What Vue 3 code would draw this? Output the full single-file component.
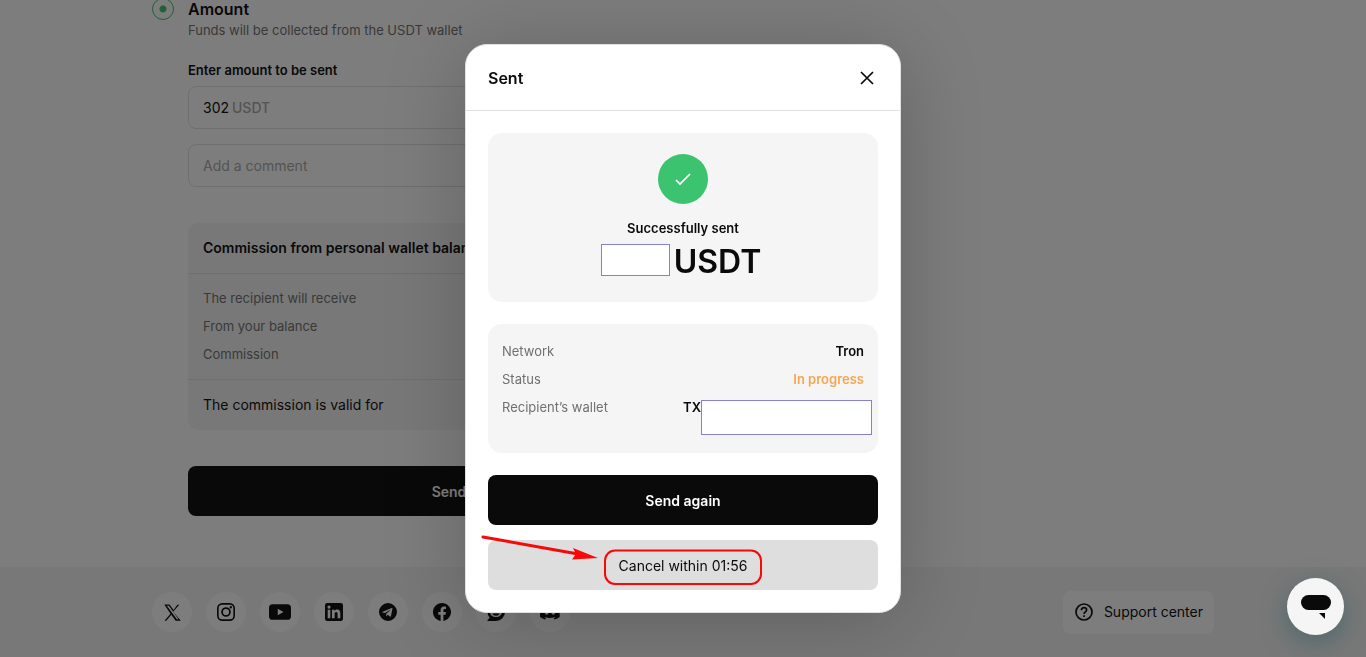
<script setup>
import { ref } from 'vue'

const amount = ref('302')
const comment = ref('')
const mode = ref('amount')

const commissionRows = ['The recipient will receive', 'From your balance', 'Commission']

const socials = [
  { name: 'X', size: 17, path: 'M18.901 1.153h2.600l-8.500 9.800L23.800 23.500h-7.400l-6.100-8.200-7 8.200H.700l8.500-9.900L.400.800h7.400l5.700 7.600ZM18.200 21.700h2.300L6.900 2.600H4Z' },
  { name: 'Instagram', size: 18, path: 'M7 0h10a7 7 0 0 1 7 7v10a7 7 0 0 1-7 7H7a7 7 0 0 1-7-7V7a7 7 0 0 1 7-7Zm0 2.200A4.800 4.800 0 0 0 2.200 7v10A4.800 4.800 0 0 0 7 21.800h10a4.800 4.800 0 0 0 4.800-4.800V7A4.800 4.800 0 0 0 17 2.200ZM12 5.600a6.400 6.400 0 1 1 0 12.800 6.400 6.400 0 0 1 0-12.800Zm0 2.300a4.100 4.100 0 1 0 0 8.200 4.100 4.100 0 0 0 0-8.200ZM18.400 4a1.600 1.600 0 1 1 0 3.200 1.600 1.600 0 0 1 0-3.200Z' },
  { name: 'YouTube', size: 22, path: 'M20 3.500a4 4 0 0 1 4 4v9a4 4 0 0 1-4 4H4a4 4 0 0 1-4-4v-9a4 4 0 0 1 4-4ZM9.545 15.568L15.818 12 9.545 8.432Z' },
  { name: 'LinkedIn', size: 18, path: 'M3 0h18a3 3 0 0 1 3 3v18a3 3 0 0 1-3 3H3a3 3 0 0 1-3-3V3a3 3 0 0 1 3-3Zm.600 9v11.400h3.500V9ZM5.350 3.400a2.050 2.050 0 1 0 0 4.100 2.050 2.050 0 0 0 0-4.100ZM9.300 9v11.400h3.550v-5.600c0-1.500.300-2.900 2.100-2.900s1.850 1.700 1.850 3v5.500h3.600v-6.200c0-3.100-.700-5.500-4.250-5.500-1.700 0-2.850.950-3.350 1.850V9Z' },
  { name: 'Telegram', size: 18, path: 'M12 0a12 12 0 1 0 0 24 12 12 0 0 0 0-24Zm5.900 7.200-2 10.300c-.150.700-.600.900-1.200.550l-3.100-2.300-1.500 1.450c-.200.200-.350.300-.600.300l.200-3.200 5.800-5.200c.250-.250-.050-.350-.400-.150l-7.200 4.500-3.100-.950c-.650-.200-.700-.650.150-1l12-4.700c.600-.200 1.100.150.950.400Z' },
  { name: 'Facebook', size: 18, path: 'M24 12.073C24 5.446 18.627.073 12 .073S0 5.446 0 12.073c0 5.990 4.388 10.954 10.125 11.854v-8.385H7.078v-3.469h3.047V9.430c0-3.007 1.792-4.669 4.533-4.669 1.312 0 2.686.235 2.686.235v2.953H15.830c-1.491 0-1.956.925-1.956 1.874v2.250h3.328l-.532 3.469h-2.796v8.385C19.612 23.027 24 18.062 24 12.073Z' },
  { name: 'Reddit chat', size: 18, path: 'M12 0a12 12 0 0 1 0 24H1c-.600 0-.800-.600-.400-1l3-3.300A12 12 0 0 1 12 0Zm0 5c-4.600 0-8 2.900-8 6.900s3.400 6.800 8 6.800 8-3.200 8-6.800S16.600 5 12 5ZM8.800 9.500a1.700 1.700 0 1 1 0 3.400 1.700 1.700 0 0 1 0-3.400Zm6.400 0a1.700 1.700 0 1 1 0 3.400 1.700 1.700 0 0 1 0-3.400ZM7.500 14h9c-.500 1.900-2.200 3-4.500 3s-4-1.100-4.500-3Z' },
  { name: 'Discord', size: 20, path: 'M20.317 4.370a19.791 19.791 0 0 0-4.885-1.515c-.300.400-.500.850-.684 1.250a18.270 18.270 0 0 0-5.487 0c-.200-.430-.400-.860-.694-1.250A19.736 19.736 0 0 0 3.677 4.370C.533 9.046-.320 13.580.099 18.058a19.900 19.900 0 0 0 5.993 3.030c.460-.630.870-1.300 1.226-1.994a13.107 13.107 0 0 1-1.872-.892l.372-.292c3.928 1.793 8.180 1.793 12.062 0l.373.292c-.600.350-1.220.650-1.873.892.360.698.772 1.362 1.225 1.993a19.839 19.839 0 0 0 6.002-3.030c.500-5.177-.838-9.674-3.290-13.687ZM8.020 15.330c-1.183 0-2.157-1.085-2.157-2.419s.956-2.419 2.157-2.419 2.176 1.096 2.157 2.420c0 1.333-.956 2.418-2.157 2.418Zm7.975 0c-1.183 0-2.157-1.085-2.157-2.419s.955-2.419 2.157-2.419 2.176 1.096 2.157 2.420c0 1.333-.946 2.418-2.157 2.418Z' },
]
</script>

<template>
  <div class="page">
    <main class="wrap">
      <form class="step" @submit.prevent>
        <input id="mode-amount" v-model="mode" class="radio" type="radio" value="amount" />
        <div class="fields">
          <label class="step-title" for="mode-amount">Amount</label>
          <p class="step-note">Funds will be collected from the USDT wallet</p>

          <label class="field-label" for="amount">Enter amount to be sent</label>
          <div class="field">
            <input id="amount" v-model="amount" class="amount" type="text" />
            <span class="unit">USDT</span>
          </div>
          <input v-model="comment" class="field comment" type="text" placeholder="Add a comment" aria-label="Add a comment" />

          <section class="commission">
            <h2 class="commission-head">Commission from personal wallet balance</h2>
            <ul class="commission-rows">
              <li v-for="row in commissionRows" :key="row">{{ row }}</li>
            </ul>
            <p class="commission-foot">The commission is valid for</p>
          </section>

          <button class="btn primary send" type="submit">Send</button>
        </div>
      </form>
    </main>

    <footer class="footer">
      <div class="wrap footer-row">
        <nav class="socials" aria-label="Social networks">
          <a v-for="s in socials" :key="s.name" href="#" :aria-label="s.name" class="social">
            <svg :width="s.size" :height="s.size" viewBox="0 0 24 24" fill="currentColor" fill-rule="evenodd"><path :d="s.path" /></svg>
          </a>
        </nav>
        <a class="support" href="#">
          <svg width="20" height="20" viewBox="0 0 20 20" fill="none" stroke="currentColor" stroke-width="1.700">
            <circle cx="10" cy="10" r="8" />
            <path d="M7.400 8.200c0-1.500 1.100-2.500 2.600-2.500s2.600 1 2.600 2.300c0 1.900-2.500 2-2.500 4" />
            <path d="M10.100 13.200v1.700" />
          </svg>
          Support center
        </a>
      </div>
    </footer>

    <div class="overlay">
      <section class="modal" role="dialog" aria-modal="true" aria-labelledby="modal-title">
        <header class="modal-head">
          <h1 id="modal-title">Sent</h1>
          <button class="close" type="button" aria-label="Close">
            <svg width="14" height="14" viewBox="0 0 14 14" fill="none" stroke="currentColor" stroke-width="1.700"><path d="M1 1l12 12M13 1L1 13" /></svg>
          </button>
        </header>
        <div class="modal-body">
          <div class="card result">
            <span class="badge">
              <svg width="16" height="14" viewBox="0 0 16 14" fill="none" stroke="currentColor" stroke-width="1.700"><path d="M1 8l4 4L15 2" /></svg>
            </span>
            <p class="result-text">Successfully sent</p>
            <p class="sum"><span class="mask mask-sum"></span>USDT</p>
          </div>

          <dl class="card details">
            <div class="detail"><dt>Network</dt><dd>Tron</dd></div>
            <div class="detail"><dt>Status</dt><dd class="progress">In progress</dd></div>
            <div class="detail wallet"><dt>Recipient’s wallet</dt><dd class="address">TX<span class="mask mask-address"></span></dd></div>
          </dl>

          <button class="btn primary" type="button">Send again</button>
          <div class="cancel-area">
            <button class="btn cancel" type="button">Cancel within 01:56</button>
            <svg class="marker" width="390" height="50" viewBox="0 0 390 50" fill="none" stroke="#f80808" aria-hidden="true">
              <rect x="117" y="10.500" width="156" height="33.500" rx="10" stroke-width="2" />
              <path d="M-5-3L90 14" stroke-width="3" stroke-linecap="round" />
              <path d="M85 8l25 10-26 1.500 4-5.500z" fill="#f80808" stroke="none" />
            </svg>
          </div>
        </div>
      </section>
    </div>

    <button class="chat" type="button" aria-label="Open chat">
      <svg width="30" height="24" viewBox="0 0 30 24" fill="currentColor"><rect x="0" y="0" width="30" height="15" rx="7.500" /><path d="M18 18h6v6z" /></svg>
    </button>
  </div>
</template>

<style>
body {
  margin: 0;
}
</style>

<style scoped>
.page {
  position: relative;
  display: flex;
  flex-direction: column;
  min-height: 100vh;
  overflow: hidden;
  background: #fff;
  color: #0a0a0a;
  font: 13px/20px Inter, "Noto Sans", sans-serif;
}
.page *,
.page {
  box-sizing: border-box;
}
h1, h2, p, ul, dl, dd {
  margin: 0;
  padding: 0;
}
button, input {
  font-family: inherit;
  color: inherit;
}
.wrap {
  width: 100%;
  max-width: 1062px;
  margin: 0 auto;
}
main.wrap {
  flex: 1;
}
.step {
  display: flex;
  gap: 14px;
  margin-top: -2px;
}
.radio {
  appearance: none;
  width: 22px;
  height: 22px;
  margin: 0;
  flex: none;
  border: 1px solid #3bc370;
  border-radius: 50%;
  background: radial-gradient(circle, #3bc370 3px, transparent 4px);
}
.fields {
  display: flex;
  flex-direction: column;
  flex: 1;
  max-width: 522px;
}
.step-title {
  font-size: 16px;
  line-height: 22px;
  font-weight: 600;
}
.step-note {
  color: #707070;
}
.field-label {
  margin: 20px 0 6px;
  font-weight: 600;
}
.field {
  display: flex;
  align-items: center;
  gap: 3px;
  height: 43px;
  padding: 0 14px;
  border: 1px solid #e1e1e1;
  border-radius: 8px;
  background: none;
  font-size: 14px;
}
.amount {
  width: 26px;
  padding: 0;
  border: 0;
  background: none;
  font-size: 14px;
}
.unit {
  color: #a8a8a8;
  font-weight: 500;
}
.comment {
  margin-top: 15px;
}
.comment::placeholder {
  color: #a8a8a8;
  opacity: 1;
}
.commission {
  margin-top: 36px;
  border-radius: 10px;
  background: #f5f5f5;
}
.commission-head {
  padding: 15px;
  border-bottom: 1px solid #e1e1e1;
  font-size: 14px;
  line-height: 20px;
  font-weight: 600;
}
.commission-rows {
  display: flex;
  flex-direction: column;
  gap: 8px;
  padding: 14px 15px 15px;
  border-bottom: 1px solid #e1e1e1;
  list-style: none;
  color: #707070;
}
.commission-foot {
  padding: 15px;
  font-size: 14px;
}
.btn {
  width: 100%;
  height: 50px;
  border: 0;
  border-radius: 8px;
  font-size: 14px;
}
.primary {
  background: #0a0a0a;
  color: #fff;
  font-weight: 600;
}
.send {
  margin-top: 36px;
}
.footer {
  background: #f5f5f5;
}
.footer-row {
  display: flex;
  align-items: center;
  justify-content: space-between;
  height: 90px;
}
.socials {
  display: flex;
  gap: 14px;
}
.social {
  display: grid;
  place-items: center;
  width: 40px;
  height: 40px;
  border-radius: 50%;
  background: #fff;
  color: inherit;
}
.support {
  display: flex;
  align-items: center;
  gap: 10px;
  height: 43px;
  padding: 0 11px;
  border-radius: 8px;
  background: #fff;
  color: inherit;
  font-size: 14px;
  text-decoration: none;
}
.overlay {
  position: fixed;
  inset: 0;
  display: grid;
  place-items: center;
  background: rgba(10, 10, 10, 0.53);
}
.modal {
  width: 100%;
  max-width: 436px;
  border: 1px solid #e1e1e1;
  border-radius: 22px;
  background: #fff;
  box-shadow: 0 8px 80px rgba(0, 0, 0, 0.22);
}
.modal-head {
  display: flex;
  align-items: center;
  justify-content: space-between;
  height: 66px;
  padding: 0 22px;
  border-bottom: 1px solid #e1e1e1;
}
.modal-head h1 {
  font-size: 16px;
  font-weight: 600;
}
.close {
  display: grid;
  place-items: center;
  width: 22px;
  height: 22px;
  padding: 0;
  border: 0;
  background: none;
}
.modal-body {
  display: flex;
  flex-direction: column;
  gap: 22px;
  padding: 22px;
}
.card {
  border-radius: 14px;
  background: #f5f5f5;
}
.result {
  display: flex;
  flex-direction: column;
  align-items: center;
  padding: 21px 14px 20px;
}
.badge {
  display: grid;
  place-items: center;
  width: 50px;
  height: 50px;
  border-radius: 50%;
  background: #3bc370;
  color: #fff;
}
.result-text {
  margin: 14px 0 4px;
  font-weight: 600;
}
.sum {
  display: flex;
  align-items: center;
  gap: 4px;
  padding-right: 4px;
  font-size: 32px;
  line-height: 40px;
  font-weight: 600;
}
.mask {
  border: 1px solid #8580d0;
  background: #fff;
}
.mask-sum {
  width: 69px;
  height: 32px;
  margin-bottom: 4px;
}
.details {
  display: flex;
  flex-direction: column;
  gap: 8px;
  padding: 17px 14px 16px;
}
.detail {
  display: flex;
  justify-content: space-between;
}
.detail dt {
  color: #707070;
}
.detail dd {
  font-weight: 600;
}
.detail .progress {
  color: #f7a650;
}
.wallet {
  height: 40px;
}
.address {
  display: flex;
}
.mask-address {
  width: 171px;
  height: 35px;
  margin: 3px -8px 0 0;
}
.cancel-area {
  position: relative;
  margin-top: -7px;
}
.cancel {
  display: block;
  background: #dedede;
}
.marker {
  position: absolute;
  top: 0;
  left: 50%;
  margin-left: -195px;
  overflow: visible;
  pointer-events: none;
}
.chat {
  position: fixed;
  right: 22px;
  bottom: 22px;
  display: grid;
  place-items: center;
  width: 57px;
  height: 57px;
  padding: 0;
  border: 0;
  border-radius: 50%;
  background: #f5f5f5;
  box-shadow: 0 8px 24px rgba(40, 90, 95, 0.5);
}
</style>
